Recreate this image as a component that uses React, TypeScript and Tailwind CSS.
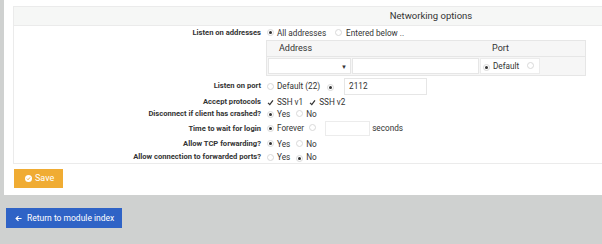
import React from "react";

const Radio = ({ on }: { on?: boolean }) => (
  <span className="inline-flex items-center justify-center w-[7px] h-[7px] rounded-full border border-[#d9d9d9] bg-white shrink-0">
    {on && <span className="w-[3px] h-[3px] rounded-full bg-[#333]" />}
  </span>
);

const Check = () => (
  <svg width="7" height="7" viewBox="0 0 10 10" className="shrink-0">
    <polyline points="1.5,5.5 4,8 8.5,2" fill="none" stroke="#333" strokeWidth="1.8" />
  </svg>
);

const Row = ({ label, h, children }: { label: string; h: string; children: React.ReactNode }) => (
  <div className={`flex items-center ${h}`}>
    <div className="w-[247px] text-right font-bold text-[7.6px] text-[#333]">{label}</div>
    <div className="ml-[6px] flex items-center text-[8.2px] text-[#333]">{children}</div>
  </div>
);

export default function App() {
  return (
    <div className="w-[602px] h-[244px] overflow-hidden bg-[#cfd1d0]" style={{ fontFamily: "Roboto, 'Liberation Sans', sans-serif" }}>
      <div className="ml-[4px] w-[900px] h-[195px] bg-white pt-[6px] pl-[9px]">
        <div className="w-[836px] border border-[#ebebeb]">
          <div className="h-[19px] bg-[#f6f7f6] border-b border-[#ebebeb] flex items-center justify-center text-[9.5px] text-[#333]">
            Networking options
          </div>
          <Row label="Listen on addresses" h="h-[14px]">
            <Radio on />
            <span className="ml-[3px]">All addresses</span>
            <span className="ml-[9px]"><Radio /></span>
            <span className="ml-[4px]">Entered below ..</span>
          </Row>
          <div className="pl-[252px]">
            <div className="w-[320px] border border-[#e6e6e6] bg-[#f6f6f6] text-[9px] text-[#333]">
              <div className="h-[16px] flex items-center border-b border-[#e6e6e6]">
                <span className="ml-[12px]">Address</span>
                <span className="ml-[180px]">Port</span>
              </div>
              <div className="h-[18px] flex items-center">
                <div className="ml-[1px] w-[83px] h-[16px] bg-white border border-[#e6e6e6] flex items-center justify-end pr-[3px] text-[6px] text-[#333]">▼</div>
                <div className="ml-[1px] w-[127px] h-[16px] bg-white border border-[#e6e6e6]" />
                <div className="ml-[1px] w-[60px] h-[16px] bg-white border border-[#ececec] flex items-center text-[8.2px] text-[#333]">
                  <span className="ml-[2px]"><Radio on /></span>
                  <span className="ml-[3px]">Default</span>
                  <span className="ml-[8px]"><Radio /></span>
                </div>
              </div>
            </div>
          </div>
          <Row label="Listen on port" h="h-[20px]">
            <Radio />
            <span className="ml-[3px]">Default (22)</span>
            <span className="ml-[7px]"><Radio on /></span>
            <div className="ml-[10px] w-[83px] h-[17px] border border-[#e6e6e6] flex items-center pl-[4px] text-[#333]">2112</div>
          </Row>
          <Row label="Accept protocols" h="h-[12px]">
            <Check />
            <span className="ml-[3px]">SSH v1</span>
            <span className="ml-[6px]"><Check /></span>
            <span className="ml-[3px]">SSH v2</span>
          </Row>
          <Row label="Disconnect if client has crashed?" h="h-[12px]">
            <Radio on />
            <span className="ml-[3px]">Yes</span>
            <span className="ml-[6px]"><Radio /></span>
            <span className="ml-[3px]">No</span>
          </Row>
          <Row label="Time to wait for login" h="h-[17px]">
            <Radio on />
            <span className="ml-[3px]">Forever</span>
            <span className="ml-[5px]"><Radio /></span>
            <div className="ml-[9px] w-[45px] h-[15px] border border-[#ececec]" />
            <span className="ml-[2px]">seconds</span>
          </Row>
          <Row label="Allow TCP forwarding?" h="h-[14px]">
            <Radio on />
            <span className="ml-[3px]">Yes</span>
            <span className="ml-[6px]"><Radio /></span>
            <span className="ml-[3px]">No</span>
          </Row>
          <Row label="Allow connection to forwarded ports?" h="h-[12px]">
            <Radio />
            <span className="ml-[3px]">Yes</span>
            <span className="ml-[6px]"><Radio on /></span>
            <span className="ml-[3px]">No</span>
          </Row>
        </div>
        <div className="mt-[5px] ml-[1px] w-[49px] h-[19px] bg-[#f0ac33] flex items-center text-white text-[9px]">
          <svg width="7" height="7" viewBox="0 0 16 16" className="ml-[11px]">
            <circle cx="8" cy="8" r="8" fill="#fff" />
            <polyline points="4.5,8.3 7,10.8 11.5,5.5" fill="none" stroke="#f0ac33" strokeWidth="2.2" />
          </svg>
          <span className="ml-[3px]">Save</span>
        </div>
      </div>
      <div className="mt-[13px] ml-[6px] w-[116px] h-[20px] bg-[#2f63c6] flex items-center text-white text-[8.5px]">
        <svg width="7" height="7" viewBox="0 0 16 16" className="ml-[9px]">
          <path d="M15 8H3M8 2.5L2.5 8 8 13.5" fill="none" stroke="#fff" strokeWidth="2.6" />
        </svg>
        <span className="ml-[5px]">Return to module index</span>
      </div>
    </div>
  );
}
